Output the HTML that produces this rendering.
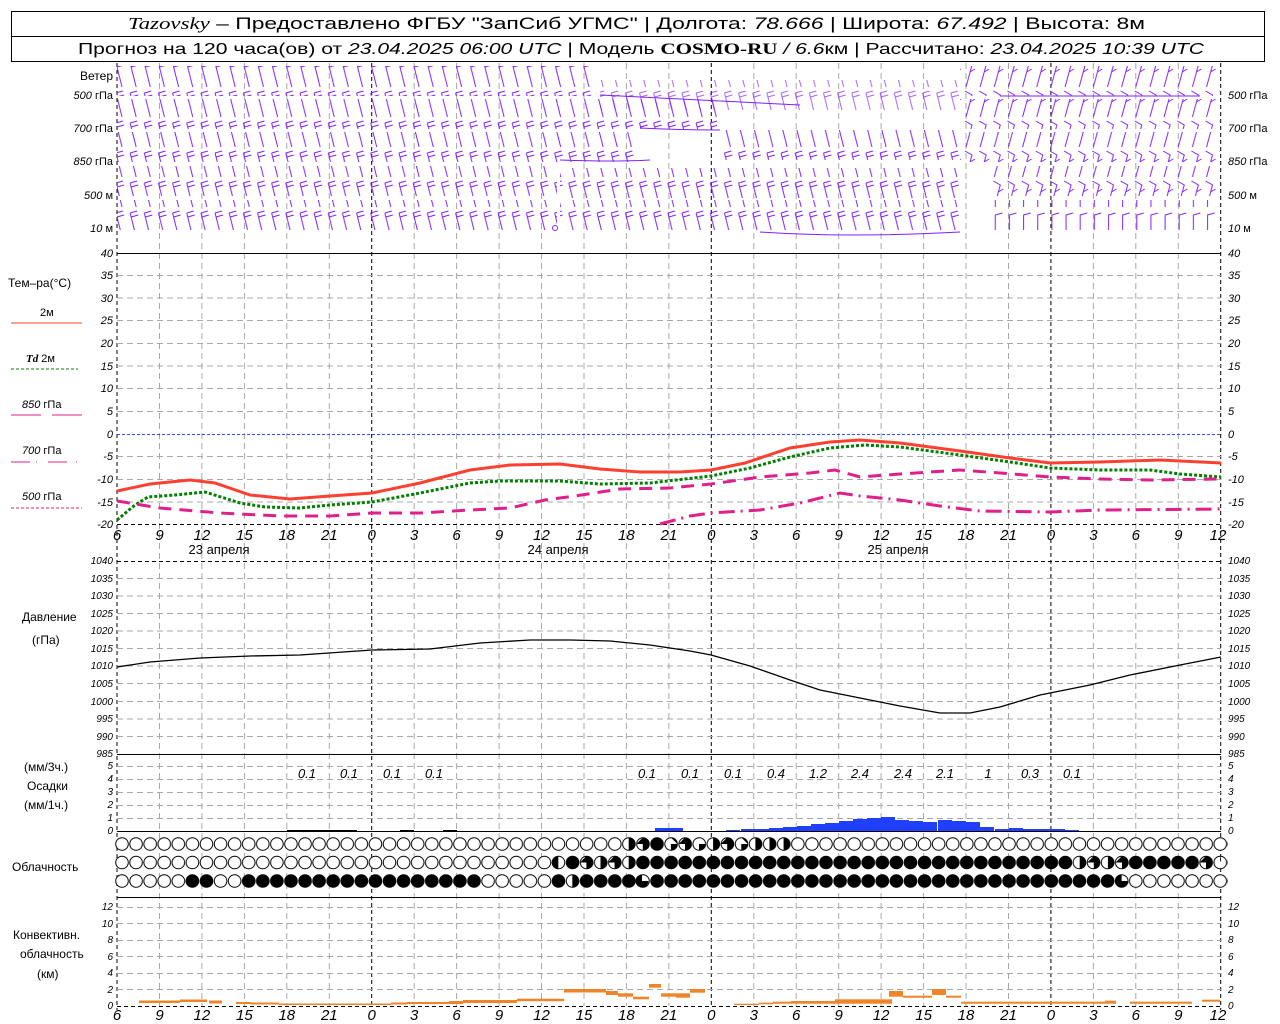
<!DOCTYPE html>
<html><head><meta charset="utf-8"><style>
html,body{margin:0;padding:0;background:#fff;width:1280px;height:1024px;overflow:hidden}
svg{display:block}
text{font-family:"Liberation Sans",sans-serif;fill:#000}
.t{font-size:11px;font-style:italic}
.l{font-size:12px}
.ax{font-size:15px;font-style:italic}
</style></head><body>
<svg width="1280" height="1024" viewBox="0 0 1280 1024" xmlns="http://www.w3.org/2000/svg">
<defs>
<pattern id="bA" patternUnits="userSpaceOnUse" x="114" y="0" width="14.15" height="30">
<path d="M2 3 L8 27 M2 3 L9 1 M3 7 L10 5" stroke="#8020ff" stroke-width="1" fill="none"/></pattern>
<pattern id="bB" patternUnits="userSpaceOnUse" x="114" y="0" width="14.15" height="30">
<path d="M3 27 L9 5 L2 1 M7 12 L12 9" stroke="#8020ff" stroke-width="1" fill="none"/></pattern>
<pattern id="bC" patternUnits="userSpaceOnUse" x="114" y="0" width="14.15" height="30">
<path d="M4 27 L4 5 L11 3" stroke="#8020ff" stroke-width="1" fill="none"/></pattern>
<pattern id="cE" patternUnits="userSpaceOnUse" x="114.96" y="0" width="14.08" height="1024">
<circle cx="7.04" cy="844" r="6.3" fill="#fff" stroke="#000" stroke-width="1"/>
<circle cx="7.04" cy="862.5" r="6.3" fill="#fff" stroke="#000" stroke-width="1"/>
<circle cx="7.04" cy="881" r="6.3" fill="#fff" stroke="#000" stroke-width="1"/></pattern>
<pattern id="cF" patternUnits="userSpaceOnUse" x="114.96" y="0" width="14.08" height="1024">
<circle cx="7.04" cy="844" r="6.5" fill="#000"/>
<circle cx="7.04" cy="862.5" r="6.5" fill="#000"/>
<circle cx="7.04" cy="881" r="6.5" fill="#000"/></pattern>
</defs>

<!-- header -->
<rect x="11.5" y="11.5" width="1253" height="50" fill="none" stroke="#000"/>
<line x1="11" y1="36.5" x2="1265" y2="36.5" stroke="#000"/>
<text x="128" y="29" font-size="17" textLength="1017" lengthAdjust="spacingAndGlyphs"><tspan font-family="Liberation Serif" font-style="italic">Tazovsky</tspan> – Предоставлено ФГБУ "ЗапСиб УГМС" | Долгота: <tspan font-style="italic">78.666</tspan> | Широта: <tspan font-style="italic">67.492</tspan> | Высота: 8м</text>
<text x="78" y="54" font-size="16" textLength="1126" lengthAdjust="spacingAndGlyphs">Прогноз на 120 часа(ов) от <tspan font-style="italic">23.04.2025 06:00 UTC</tspan>  | Модель <tspan font-weight="bold" font-family="Liberation Serif">COSMO-RU</tspan> <tspan font-style="italic">/ 6.6</tspan>км | Рассчитано: <tspan font-style="italic">23.04.2025 10:39 UTC</tspan></text>

<!-- vertical grid -->
<g stroke="#a8a8a8" stroke-dasharray="6,4" stroke-width="1">
<path d="M159.5 63V1006M201.9 63V1006M244.4 63V1006M286.8 63V1006M329.3 63V1006M414.2 63V1006M456.6 63V1006M499.1 63V1006M541.5 63V1006M584 63V1006M626.4 63V1006M668.9 63V1006M753.8 63V1006M796.2 63V1006M838.7 63V1006M881.1 63V1006M923.6 63V1006M966 63V1006M1008.5 63V1006M1093.4 63V1006M1135.8 63V1006M1178.3 63V1006"/>
</g>
<g stroke="#000" stroke-dasharray="4,3" stroke-width="1">
<path d="M117 63V1010M371.7 63V1006M711.3 63V1006M1050.9 63V1006M1220.7 63V1010"/>
</g>

<!-- wind barbs -->
<rect x="117" y="66" width="480" height="30" fill="url(#bA)"/>
<rect x="117" y="99" width="600" height="30" fill="url(#bA)"/>
<rect x="117" y="132" width="520" height="30" fill="url(#bA)"/>
<rect x="117" y="166" width="440" height="30" fill="url(#bA)"/>
<rect x="117" y="200" width="440" height="30" fill="url(#bA)"/>
<rect x="600" y="80" width="360" height="30" fill="url(#bA)" opacity="0.7"/>
<rect x="720" y="130" width="240" height="30" fill="url(#bA)"/>
<rect x="560" y="200" width="400" height="30" fill="url(#bA)"/>
<rect x="560" y="168" width="400" height="30" fill="url(#bA)"/>
<rect x="960" y="66" width="260" height="30" fill="url(#bB)"/>
<rect x="960" y="99" width="260" height="30" fill="url(#bB)"/>
<rect x="960" y="132" width="260" height="30" fill="url(#bB)"/>
<rect x="990" y="166" width="230" height="30" fill="url(#bB)"/>
<rect x="990" y="200" width="230" height="30" fill="url(#bC)"/>
<path d="M600 95 Q700 100 800 105 M640 128 Q680 130 720 130 M560 160 Q620 162 650 160 M1000 96 L1200 96 M760 232 Q850 238 960 232" stroke="#8020ff" fill="none"/>
<circle cx="555" cy="228" r="2.5" fill="none" stroke="#8020ff"/>

<g class="t" text-anchor="end">
<text x="113" y="80" class="l" style="font-style:normal">Ветер</text>
<text x="113" y="99">500 <tspan font-style="normal">гПа</tspan></text>
<text x="113" y="132">700 <tspan font-style="normal">гПа</tspan></text>
<text x="113" y="165">850 <tspan font-style="normal">гПа</tspan></text>
<text x="113" y="199">500 <tspan font-style="normal">м</tspan></text>
<text x="113" y="232">10 <tspan font-style="normal">  м</tspan></text>
</g>
<g class="t">
<text x="1228" y="99">500 <tspan font-style="normal">гПа</tspan></text>
<text x="1228" y="132">700 <tspan font-style="normal">гПа</tspan></text>
<text x="1228" y="165">850 <tspan font-style="normal">гПа</tspan></text>
<text x="1228" y="199">500 <tspan font-style="normal">м</tspan></text>
<text x="1228" y="232">10 <tspan font-style="normal">  м</tspan></text>
</g>

<!-- temp panel -->
<line x1="117" y1="253.5" x2="1221" y2="253.5" stroke="#000"/>
<g stroke="#a8a8a8" stroke-dasharray="6,4">
<path d="M117 275.5H1221M117 298H1221M117 320.5H1221M117 343.5H1221M117 366H1221M117 388.5H1221M117 411.5H1221M117 456.5H1221M117 479.5H1221M117 502H1221"/>
</g>
<line x1="117" y1="434.5" x2="1221" y2="434.5" stroke="#3050ff" stroke-dasharray="3,2"/>
<line x1="117" y1="524.5" x2="1221" y2="524.5" stroke="#000" stroke-dasharray="4,3"/>
<g class="t" text-anchor="end">
<text x="113" y="257">40</text><text x="113" y="279">35</text><text x="113" y="302">30</text><text x="113" y="324">25</text><text x="113" y="347">20</text><text x="113" y="370">15</text><text x="113" y="392">10</text><text x="113" y="415">5</text><text x="113" y="438">0</text><text x="113" y="460">-5</text><text x="113" y="483">-10</text><text x="113" y="506">-15</text><text x="113" y="528">-20</text>
</g>
<g class="t">
<text x="1228" y="257">40</text><text x="1228" y="279">35</text><text x="1228" y="302">30</text><text x="1228" y="324">25</text><text x="1228" y="347">20</text><text x="1228" y="370">15</text><text x="1228" y="392">10</text><text x="1228" y="415">5</text><text x="1228" y="438">0</text><text x="1228" y="460">-5</text><text x="1228" y="483">-10</text><text x="1228" y="506">-15</text><text x="1228" y="528">-20</text>
</g>
<text x="8" y="287" class="l">Тем–ра(°С)</text>
<text x="40" y="316" font-size="11">2м</text>
<line x1="11" y1="323" x2="82" y2="323" stroke="#ff4030" stroke-width="1"/>
<text x="26" y="362" font-size="11"><tspan font-style="italic" font-weight="bold" font-family="Liberation Serif">Td</tspan>  2м</text>
<line x1="11" y1="369" x2="78" y2="369" stroke="#008000" stroke-dasharray="3,2"/>
<text x="22" y="408" class="t">850 <tspan font-style="normal">гПа</tspan></text>
<path d="M11 415H41M52 415H82" stroke="#e0208a"/>
<text x="22" y="454" class="t">700 <tspan font-style="normal">гПа</tspan></text>
<path d="M11 462H30M36 462H37M48 462H67M76 462H77" stroke="#e0208a"/>
<text x="22" y="500" class="t">500 <tspan font-style="normal">гПа</tspan></text>
<line x1="11" y1="508" x2="82" y2="508" stroke="#e0208a" stroke-dasharray="3,2"/>

<!-- temp curves -->
<path d="M117 520 L135 505 L148 497 L175 495 L205 492 L240 503 L265 507 L300 508 L330 505 L372 502 L420 493 L470 483 L500 481 L560 481 L600 484 L650 483 L711 476 L750 468 L790 457 L830 448 L865 445 L900 447 L960 455 L1010 462 L1050 468 L1100 470 L1150 470 L1180 474 L1221 477" fill="none" stroke="#008000" stroke-width="3" stroke-dasharray="3,2"/>
<path d="M117 491 L150 484 L190 480 L215 483 L250 495 L290 499 L330 496 L372 493 L420 483 L470 470 L510 465 L560 464 L600 469 L640 472 L680 472 L711 470 L745 463 L790 448 L830 442 L860 440 L900 443 L960 451 L1010 458 L1050 463 L1100 462 L1160 460 L1221 463" fill="none" stroke="#ff4030" stroke-width="3"/>
<path d="M117 501 L160 508 L220 513 L280 516 L330 516 L372 513 L420 513 L470 510 L510 508 L545 500 L575 496 L620 489 L670 488 L711 484 L760 477 L810 473 L835 470 L860 477 L900 474 L960 470 L1000 473 L1050 477 L1100 479 L1150 480 L1221 479" fill="none" stroke="#e0208a" stroke-width="3" stroke-dasharray="13,8"/>
<path d="M660 524 L690 516 L711 513 L760 510 L800 503 L840 493 L860 496 L900 500 L940 506 L980 511 L1050 512 L1100 510 L1221 509" fill="none" stroke="#e0208a" stroke-width="3" stroke-dasharray="16,6,2,6"/>

<!-- time axis labels -->
<g class="ax" text-anchor="middle">
<text x="117" y="540">6</text><text x="159.5" y="540">9</text><text x="201.9" y="540">12</text><text x="244.4" y="540">15</text><text x="286.8" y="540">18</text><text x="329.3" y="540">21</text><text x="371.7" y="540">0</text><text x="414.2" y="540">3</text><text x="456.6" y="540">6</text><text x="499.1" y="540">9</text><text x="541.5" y="540">12</text><text x="584" y="540">15</text><text x="626.4" y="540">18</text><text x="668.9" y="540">21</text><text x="711.3" y="540">0</text><text x="753.8" y="540">3</text><text x="796.2" y="540">6</text><text x="838.7" y="540">9</text><text x="881.1" y="540">12</text><text x="923.6" y="540">15</text><text x="966" y="540">18</text><text x="1008.5" y="540">21</text><text x="1050.9" y="540">0</text><text x="1093.4" y="540">3</text><text x="1135.8" y="540">6</text><text x="1178.3" y="540">9</text><text x="1218" y="540">12</text>
</g>
<g font-size="13" text-anchor="middle">
<text x="219" y="554">23 апреля</text><text x="558" y="554">24 апреля</text><text x="898" y="554">25 апреля</text>
</g>

<!-- pressure -->
<line x1="117" y1="561.5" x2="1221" y2="561.5" stroke="#000" stroke-dasharray="4,3"/>
<g stroke="#a8a8a8" stroke-dasharray="6,4">
<path d="M117 578.5H1221M117 596H1221M117 613.5H1221M117 631H1221M117 648.5H1221M117 666H1221M117 683.5H1221M117 701.5H1221M117 719H1221M117 736.5H1221"/>
</g>
<g class="t" text-anchor="end" style="font-size:10px">
<text x="113" y="564">1040</text><text x="113" y="582">1035</text><text x="113" y="599">1030</text><text x="113" y="617">1025</text><text x="113" y="634">1020</text><text x="113" y="652">1015</text><text x="113" y="669">1010</text><text x="113" y="687">1005</text><text x="113" y="705">1000</text><text x="113" y="722">995</text><text x="113" y="740">990</text><text x="113" y="757">985</text>
</g>
<g class="t" style="font-size:10px">
<text x="1228" y="564">1040</text><text x="1228" y="582">1035</text><text x="1228" y="599">1030</text><text x="1228" y="617">1025</text><text x="1228" y="634">1020</text><text x="1228" y="652">1015</text><text x="1228" y="669">1010</text><text x="1228" y="687">1005</text><text x="1228" y="705">1000</text><text x="1228" y="722">995</text><text x="1228" y="740">990</text><text x="1228" y="757">985</text>
</g>
<text x="22" y="621" class="l">Давление</text>
<text x="32" y="644" class="l">(гПа)</text>
<path d="M117 667 L150 662 L200 658 L250 656 L300 655 L372 650 L430 649 L480 643 L530 640 L570 640 L610 641 L650 645 L690 651 L711 655 L750 666 L790 680 L820 690 L860 698 L900 706 L940 713 L970 713 L1000 707 L1040 695 L1090 685 L1130 675 L1180 665 L1221 657" fill="none" stroke="#000" stroke-width="1.3"/>

<!-- precip -->
<line x1="117" y1="754.5" x2="1221" y2="754.5" stroke="#000"/>
<g stroke="#a8a8a8" stroke-dasharray="6,4">
<path d="M117 766.5H1221M117 779.5H1221M117 792.5H1221M117 805.5H1221M117 818.5H1221"/>
</g>
<g class="t" text-anchor="end" style="font-size:10px">
<text x="113" y="769">5</text><text x="113" y="782">4</text><text x="113" y="795">3</text><text x="113" y="808">2</text><text x="113" y="821">1</text><text x="113" y="834">0</text>
</g>
<g class="t" style="font-size:10px">
<text x="1228" y="769">5</text><text x="1228" y="782">4</text><text x="1228" y="795">3</text><text x="1228" y="808">2</text><text x="1228" y="821">1</text><text x="1228" y="834">0</text>
</g>
<text x="24" y="771" font-size="12">(мм/3ч.)</text>
<text x="27" y="790" font-size="12">Осадки</text>
<text x="24" y="809" font-size="12">(мм/1ч.)</text>
<g class="t" text-anchor="middle" style="font-size:13px">
<text x="307" y="778">0.1</text><text x="349" y="778">0.1</text><text x="392" y="778">0.1</text><text x="434" y="778">0.1</text>
<text x="647" y="778">0.1</text><text x="690" y="778">0.1</text><text x="733" y="778">0.1</text><text x="776" y="778">0.4</text><text x="818" y="778">1.2</text><text x="860" y="778">2.4</text><text x="903" y="778">2.4</text><text x="945" y="778">2.1</text><text x="988" y="778">1</text><text x="1030" y="778">0.3</text><text x="1072" y="778">0.1</text>
</g>
<g fill="#2040ff">
<rect x="655" y="828" width="28" height="3"/>
<rect x="726" y="830" width="14" height="1"/>
<rect x="741" y="829" width="14" height="2"/>
<rect x="755" y="829" width="14" height="2"/>
<rect x="769" y="828" width="14" height="3"/>
<rect x="783" y="827" width="14" height="4"/>
<rect x="797" y="826" width="14" height="5"/>
<rect x="811" y="824" width="14" height="7"/>
<rect x="825" y="823" width="14" height="8"/>
<rect x="839" y="821" width="14" height="10"/>
<rect x="853" y="819" width="14" height="12"/>
<rect x="867" y="818" width="14" height="13"/>
<rect x="881" y="817" width="14" height="14"/>
<rect x="895" y="820" width="14" height="11"/>
<rect x="909" y="821" width="14" height="10"/>
<rect x="923" y="822" width="14" height="9"/>
<rect x="938" y="820" width="14" height="11"/>
<rect x="952" y="821" width="14" height="10"/>
<rect x="966" y="822" width="14" height="9"/>
<rect x="980" y="827" width="14" height="4"/>
<rect x="995" y="829" width="14" height="2"/>
<rect x="1009" y="828" width="14" height="3"/>
<rect x="1023" y="829" width="14" height="2"/>
<rect x="1037" y="829" width="14" height="2"/>
<rect x="1051" y="829" width="14" height="2"/>
<rect x="1065" y="830" width="14" height="1"/>
</g>
<g fill="#000"><rect x="287" y="830" width="70" height="1"/><rect x="400" y="830" width="14" height="1"/><rect x="443" y="830" width="14" height="1"/></g>
<line x1="117" y1="831.5" x2="1221" y2="831.5" stroke="#000"/>

<!-- clouds -->
<rect x="115" y="836" width="1113" height="54" fill="url(#cE)"/>
<rect x="185" y="873" width="28" height="16" fill="url(#cF)"/>
<rect x="241" y="873" width="240" height="16" fill="url(#cF)"/>
<rect x="551" y="873" width="14" height="16" fill="url(#cF)"/>
<rect x="579" y="873" width="56" height="16" fill="url(#cF)"/>
<rect x="649" y="873" width="466" height="16" fill="url(#cF)"/>
<rect x="565" y="855" width="14" height="16" fill="url(#cF)"/>
<rect x="635" y="855" width="437" height="16" fill="url(#cF)"/>
<rect x="1128" y="855" width="70" height="16" fill="url(#cF)"/>
<rect x="649" y="836" width="14" height="16" fill="url(#cF)"/>
<g fill="#000">
<path d="M572.3 874.5A6.5 6.5 0 0 1 572.3 887.5Z"/>
<path d="M642 881H648.5A6.5 6.5 0 0 1 642 887.5A6.5 6.5 0 0 1 635.5 881A6.5 6.5 0 0 1 642 874.5Z"/>
<path d="M1121.6 881H1128A6.5 6.5 0 0 1 1121.6 887.5A6.5 6.5 0 0 1 1115 881A6.5 6.5 0 0 1 1121.6 874.5Z"/>
<path d="M558.3 862.5V869A6.5 6.5 0 0 1 558.3 856Z"/>
<path d="M586.4 856A6.5 6.5 0 0 1 586.4 869V862.5H580Z"/>
<path d="M600.5 856A6.5 6.5 0 0 1 600.5 869Z"/>
<path d="M614.6 856A6.5 6.5 0 0 1 614.6 869V862.5H608Z"/>
<path d="M628.7 856A6.5 6.5 0 0 1 628.7 869Z"/>
<path d="M1079.7 856A6.5 6.5 0 0 1 1079.7 869Z"/>
<path d="M1093.8 856A6.5 6.5 0 0 1 1093.8 869V862.5H1087.3Z"/>
<path d="M1107.9 856A6.5 6.5 0 0 1 1107.9 869Z"/>
<path d="M1122 856A6.5 6.5 0 0 1 1122 869V862.5H1115.5Z"/>
<path d="M1206 856A6.5 6.5 0 0 1 1206 869V862.5H1199.5Z"/>
<path d="M1220 856A6.5 6.5 0 0 1 1220 862.5Z"/>
<path d="M628.7 837.5A6.5 6.5 0 0 1 628.7 850.5Z"/>
<path d="M642.8 837.5A6.5 6.5 0 0 1 642.8 850.5V844H636.3Z"/>
<path d="M670.9 837.5A6.5 6.5 0 0 1 670.9 850.5V844H677.4Z"/>
<path d="M685 837.5A6.5 6.5 0 0 1 685 850.5V844H678.5Z"/>
<path d="M699 844H705.5A6.5 6.5 0 0 1 699 850.5Z"/>
<path d="M713.1 837.5A6.5 6.5 0 0 1 713.1 850.5Z"/>
<path d="M727.2 837.5A6.5 6.5 0 0 1 727.2 850.5V844H720.7Z"/>
<path d="M741.3 837.5A6.5 6.5 0 0 1 741.3 850.5V844H747.8Z"/>
<path d="M755.4 837.5A6.5 6.5 0 0 1 755.4 850.5Z"/>
<path d="M769.5 837.5A6.5 6.5 0 0 1 769.5 850.5Z"/>
<path d="M783.6 837.5A6.5 6.5 0 0 1 783.6 850.5Z"/>
</g>
<text x="12" y="871" class="l">Облачность</text>

<!-- convective -->
<line x1="117" y1="897.5" x2="1221" y2="897.5" stroke="#000"/>
<g stroke="#a8a8a8" stroke-dasharray="6,4">
<path d="M117 907.5H1221M117 923.5H1221M117 940.5H1221M117 956.5H1221M117 973.5H1221M117 989.5H1221"/>
</g>
<g class="t" text-anchor="end" style="font-size:10px">
<text x="113" y="910">12</text><text x="113" y="927">10</text><text x="113" y="943">8</text><text x="113" y="960">6</text><text x="113" y="976">4</text><text x="113" y="993">2</text><text x="113" y="1009">0</text>
</g>
<g class="t" style="font-size:10px">
<text x="1228" y="910">12</text><text x="1228" y="927">10</text><text x="1228" y="943">8</text><text x="1228" y="960">6</text><text x="1228" y="976">4</text><text x="1228" y="993">2</text><text x="1228" y="1009">0</text>
</g>
<text x="13" y="939" font-size="12">Конвективн.</text>
<text x="20" y="958" font-size="12">облачность</text>
<text x="37" y="978" font-size="12">(км)</text>
<g fill="#f08428">
<rect x="139" y="1000.5" width="41" height="2.5"/>
<rect x="180" y="999.5" width="27" height="2.5"/>
<rect x="209" y="1000.5" width="13" height="3"/>
<rect x="236" y="1002" width="15" height="2"/>
<rect x="251" y="1002.5" width="28" height="2"/>
<rect x="279" y="1003.5" width="112" height="1.5"/>
<rect x="391" y="1002.5" width="16" height="2"/>
<rect x="407" y="1002" width="42" height="2"/>
<rect x="449" y="1001" width="14" height="3"/>
<rect x="463" y="1000" width="54" height="3"/>
<rect x="517" y="998.7" width="47" height="2.5"/>
<rect x="564" y="989" width="42" height="3.5"/>
<rect x="606" y="991" width="12" height="4"/>
<rect x="618" y="993.3" width="15" height="3.4"/>
<rect x="633" y="996.7" width="16" height="2.6"/>
<rect x="649" y="984" width="12" height="3.7"/>
<rect x="661" y="993.3" width="15" height="3.4"/>
<rect x="676" y="993.3" width="14" height="4.4"/>
<rect x="690" y="989" width="15" height="3.7"/>
<rect x="734" y="1003.7" width="25" height="1.3"/>
<rect x="759" y="1002.7" width="14" height="1.6"/>
<rect x="773" y="1001.7" width="18" height="2"/>
<rect x="791" y="1001" width="44" height="2.7"/>
<rect x="835" y="999.3" width="57" height="4.4"/>
<rect x="889" y="991" width="14" height="5.7"/>
<rect x="903" y="995.7" width="29" height="2"/>
<rect x="932" y="989" width="14" height="6"/>
<rect x="946" y="995.7" width="15" height="2"/>
<rect x="961" y="1001.7" width="144" height="2"/>
<rect x="1105" y="1000.7" width="11" height="3"/>
<rect x="1130" y="1001.7" width="62" height="2"/>
<rect x="1202" y="999.7" width="18" height="2"/>
</g>
<line x1="117" y1="1006.5" x2="1221" y2="1006.5" stroke="#000" stroke-dasharray="4,3"/>
<g class="ax" text-anchor="middle">
<text x="117" y="1020">6</text><text x="159.5" y="1020">9</text><text x="201.9" y="1020">12</text><text x="244.4" y="1020">15</text><text x="286.8" y="1020">18</text><text x="329.3" y="1020">21</text><text x="371.7" y="1020">0</text><text x="414.2" y="1020">3</text><text x="456.6" y="1020">6</text><text x="499.1" y="1020">9</text><text x="541.5" y="1020">12</text><text x="584" y="1020">15</text><text x="626.4" y="1020">18</text><text x="668.9" y="1020">21</text><text x="711.3" y="1020">0</text><text x="753.8" y="1020">3</text><text x="796.2" y="1020">6</text><text x="838.7" y="1020">9</text><text x="881.1" y="1020">12</text><text x="923.6" y="1020">15</text><text x="966" y="1020">18</text><text x="1008.5" y="1020">21</text><text x="1050.9" y="1020">0</text><text x="1093.4" y="1020">3</text><text x="1135.8" y="1020">6</text><text x="1178.3" y="1020">9</text><text x="1218" y="1020">12</text>
</g>
</svg>
</body></html>
